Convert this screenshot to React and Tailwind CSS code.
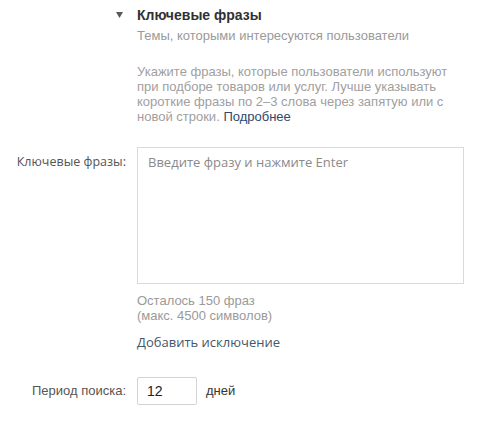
import React from "react";

const arial = { fontFamily: '"Liberation Sans", Arial, sans-serif' };
const open = { fontFamily: '"Open Sans", "Liberation Sans", sans-serif' };

const Caret = () => (
  <svg width="7" height="6" viewBox="0 0 7 6" className="block">
    <path d="M0 0 H7 L3.5 6 Z" fill="#5a5a5a" />
  </svg>
);

export default function App() {
  return (
    <div className="w-[483px] h-[424px] bg-white text-[13px]" style={arial}>
      {/* section header */}
      <div className="flex pt-[7px]">
        <div className="w-[137px] flex justify-end pr-[14px] pt-[5px]">
          <Caret />
        </div>
        <div>
          <h3 className="text-[14px] leading-[17px] font-bold text-[#2f3033]">
            Ключевые фразы
          </h3>
          <p className="mt-[4px] leading-[16px] text-[#9a9a9a]">
            Темы, которыми интересуются пользователи
          </p>
          <p className="mt-[20px] w-[315px] leading-[15px] text-[#a0a0a0]">
            Укажите фразы, которые пользователи используют при подборе товаров
            или услуг. Лучше указывать короткие фразы по 2–3 слова через
            запятую или с новой строки.{" "}
            <a className="text-[#2b4a6d] cursor-pointer">Подробнее</a>
          </p>
        </div>
      </div>

      {/* keywords */}
      <div className="flex mt-[23px]">
        <label
          className="w-[126px] mr-[11px] text-right pt-[6px] text-[12.5px] leading-[18px] text-[#555]"
          style={open}
        >
          Ключевые фразы:
        </label>
        <div>
          <textarea
            className="block w-[327px] h-[137px] border border-[#dadada] px-[10px] py-[5px] leading-[18px] text-[13px] text-[#333] placeholder:text-[#8a8a8a] resize-none outline-none"
            style={open}
            placeholder="Введите фразу и нажмите Enter"
          />
          <p className="mt-[9px] leading-[15px] text-[#9a9a9a]">
            Осталось 150 фраз
            <br />
            (макс. 4500 символов)
          </p>
          <a
            className="block mt-[10px] leading-[18px] text-[#45566a] cursor-pointer"
            style={open}
          >
            Добавить исключение
          </a>
        </div>
      </div>

      {/* period */}
      <div className="flex items-center mt-[26px]">
        <label className="w-[126px] mr-[11px] text-right text-[#555]">
          Период поиска:
        </label>
        <input
          className="w-[60px] h-[28px] border border-[#d3d3d3] rounded-[2px] px-[9px] text-[14px] text-[#222] outline-none"
          style={arial}
          defaultValue="12"
        />
        <span className="ml-[9px] text-[#333]">дней</span>
      </div>
    </div>
  );
}
